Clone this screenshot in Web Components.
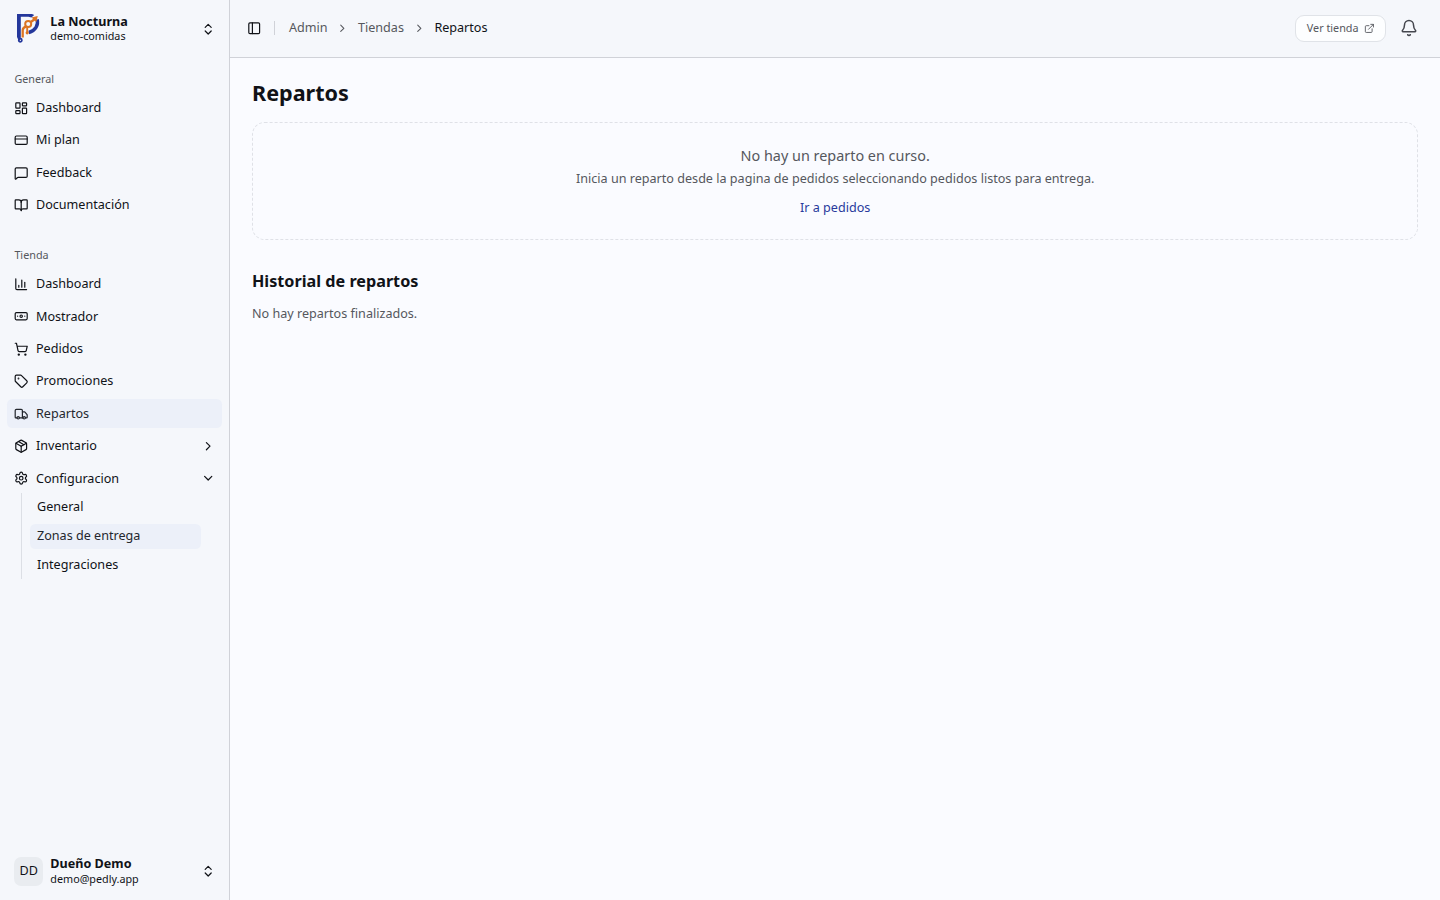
<!DOCTYPE html>
<html lang="es">
<head>
<meta charset="utf-8">
<title>Repartos</title>
<style>
  :root {
    font-size: 14.4px;
    --sidebar: #f5f7fb;
    --background: #fafbff;
    --foreground: #101217;
    --muted: #55575d;
    --border: #d0d2d8;
    --accent: #ecf0f9;
    --primary: #283a9c;
  }
  body {
    margin: 0;
    background: var(--background);
    color: var(--foreground);
    font-family: "Noto Sans", sans-serif;
    line-height: 1.5;
  }
</style>
</head>
<body>
<app-shell>
  <app-sidebar slot="sidebar">
    <account-button slot="header" name="La Nocturna" detail="demo-comidas"><brand-logo></brand-logo></account-button>
    <nav-group label="General">
      <nav-item icon="dashboard">Dashboard</nav-item>
      <nav-item icon="card">Mi plan</nav-item>
      <nav-item icon="message">Feedback</nav-item>
      <nav-item icon="book">Documentación</nav-item>
    </nav-group>
    <nav-group label="Tienda">
      <nav-item icon="chart">Dashboard</nav-item>
      <nav-item icon="banknote">Mostrador</nav-item>
      <nav-item icon="cart">Pedidos</nav-item>
      <nav-item icon="tag">Promociones</nav-item>
      <nav-item icon="truck" active>Repartos</nav-item>
      <nav-item icon="package" chevron="right">Inventario</nav-item>
      <nav-item icon="settings" chevron="down">Configuracion
        <nav-sub-item slot="sub">General</nav-sub-item>
        <nav-sub-item slot="sub" active>Zonas de entrega</nav-sub-item>
        <nav-sub-item slot="sub">Integraciones</nav-sub-item>
      </nav-item>
    </nav-group>
    <account-button slot="footer" name="Dueño Demo" detail="demo@pedly.app"><user-avatar>DD</user-avatar></account-button>
  </app-sidebar>
  <app-header slot="header">
    <crumb-item>Admin</crumb-item>
    <crumb-item>Tiendas</crumb-item>
    <crumb-item current>Repartos</crumb-item>
  </app-header>
  <page-repartos></page-repartos>
</app-shell>

<script>
const ICONS = {
  dashboard: '<rect width="7" height="9" x="3" y="3" rx="1"/><rect width="7" height="5" x="14" y="3" rx="1"/><rect width="7" height="9" x="14" y="12" rx="1"/><rect width="7" height="5" x="3" y="16" rx="1"/>',
  card: '<rect width="20" height="14" x="2" y="5" rx="2"/><path d="M2 10h20"/>',
  message: '<path d="M22 17a2 2 0 0 1-2 2H6.828a2 2 0 0 0-1.414.586l-2.202 2.202A.71.71 0 0 1 2 21.286V5a2 2 0 0 1 2-2h16a2 2 0 0 1 2 2z"/>',
  book: '<path d="M12 7v14"/><path d="M3 18a1 1 0 0 1-1-1V4a1 1 0 0 1 1-1h5a4 4 0 0 1 4 4 4 4 0 0 1 4-4h5a1 1 0 0 1 1 1v13a1 1 0 0 1-1 1h-6a3 3 0 0 0-3 3 3 3 0 0 0-3-3z"/>',
  chart: '<path d="M3 3v16a2 2 0 0 0 2 2h16"/><path d="M18 17V9"/><path d="M13 17V5"/><path d="M8 17v-3"/>',
  banknote: '<rect width="20" height="12" x="2" y="6" rx="2"/><circle cx="12" cy="12" r="2"/><path d="M6 12h.01M18 12h.01"/>',
  cart: '<circle cx="8" cy="21" r="1"/><circle cx="19" cy="21" r="1"/><path d="M2.05 2.05h2l2.66 12.42a2 2 0 0 0 2 1.58h9.78a2 2 0 0 0 1.95-1.57l1.65-7.43H5.12"/>',
  tag: '<path d="M12.586 2.586A2 2 0 0 0 11.172 2H4a2 2 0 0 0-2 2v7.172a2 2 0 0 0 .586 1.414l8.704 8.704a2.426 2.426 0 0 0 3.42 0l6.58-6.58a2.426 2.426 0 0 0 0-3.42z"/><circle cx="7.5" cy="7.5" r=".5" fill="currentColor"/>',
  truck: '<path d="M14 18V6a2 2 0 0 0-2-2H4a2 2 0 0 0-2 2v11a1 1 0 0 0 1 1h2"/><path d="M15 18H9"/><path d="M19 18h2a1 1 0 0 0 1-1v-3.65a1 1 0 0 0-.22-.624l-3.48-4.35A1 1 0 0 0 17.52 8H14"/><circle cx="17" cy="18" r="2"/><circle cx="7" cy="18" r="2"/>',
  package: '<path d="M11 21.73a2 2 0 0 0 2 0l7-4A2 2 0 0 0 21 16V8a2 2 0 0 0-1-1.73l-7-4a2 2 0 0 0-2 0l-7 4A2 2 0 0 0 3 8v8a2 2 0 0 0 1 1.73z"/><path d="M12 22V12"/><path d="M3.29 7 12 12l8.71-5"/><path d="m7.5 4.27 9 5.15"/>',
  settings: '<path d="M9.671 4.136a2.34 2.34 0 0 1 4.659 0 2.34 2.34 0 0 0 3.319 1.915 2.34 2.34 0 0 1 2.33 4.033 2.34 2.34 0 0 0 0 3.831 2.34 2.34 0 0 1-2.33 4.033 2.34 2.34 0 0 0-3.319 1.915 2.34 2.34 0 0 1-4.659 0 2.34 2.34 0 0 0-3.32-1.915 2.34 2.34 0 0 1-2.33-4.033 2.34 2.34 0 0 0 0-3.831A2.34 2.34 0 0 1 6.35 6.051a2.34 2.34 0 0 0 3.319-1.915"/><circle cx="12" cy="12" r="3"/>',
  right: '<path d="m9 18 6-6-6-6"/>',
  down: '<path d="m6 9 6 6 6-6"/>',
  updown: '<path d="m7 15 5 5 5-5"/><path d="m7 9 5-5 5 5"/>',
  panel: '<rect width="18" height="18" x="3" y="3" rx="2"/><path d="M9 3v18"/>',
  external: '<path d="M15 3h6v6"/><path d="M10 14 21 3"/><path d="M18 13v6a2 2 0 0 1-2 2H5a2 2 0 0 1-2-2V8a2 2 0 0 1 2-2h6"/>',
  bell: '<path d="M10.268 21a2 2 0 0 0 3.464 0"/><path d="M3.262 15.326A1 1 0 0 0 4 17h16a1 1 0 0 0 .74-1.673C19.41 13.956 18 12.499 18 8A6 6 0 0 0 6 8c0 4.499-1.411 5.956-2.738 7.326"/>'
};

class BaseElement extends HTMLElement {
  connectedCallback() {
    if (this.shadowRoot) return;
    this.attachShadow({ mode: 'open' }).innerHTML = this.render();
  }
}

class UiIcon extends BaseElement {
  render() {
    return `
      <style>
        :host { display: block; flex: none; width: var(--size, 1rem); height: var(--size, 1rem); }
        svg { display: block; width: 100%; height: 100%; }
      </style>
      <svg viewBox="0 0 24 24" fill="none" stroke="currentColor" stroke-width="2" stroke-linecap="round" stroke-linejoin="round">${ICONS[this.getAttribute('name')]}</svg>
    `;
  }
}

class BrandLogo extends BaseElement {
  render() {
    return `
      <style>
        :host { display: block; width: 2rem; height: 2rem; }
        svg { display: block; width: 100%; height: 100%; }
      </style>
      <svg viewBox="0 0 28.8 28.8" fill="none">
        <path d="M3 -.4H15c2.200 0 3.800.5 5.200 1.500L17.400 3.400 14.500 2.800H6.800v20.400L6 26.500H4.600L3 23z" fill="#24379b"/>
        <path d="M23.200 5.500c1.400 5.600-1.700 11.300-8.400 13" stroke="#24379b" stroke-width="3.400"/>
        <circle cx="6.300" cy="26.300" r="1.600" stroke="#24379b" stroke-width="1.700"/>
        <path d="M8.700 23.600v-7.300c0-2.500 1.600-3.400 3.700-4M16.500 8.300l4.800-3.500" stroke="#dc7422" stroke-width="2.300"/>
        <circle cx="14.200" cy="10" r="3" stroke="#dc7422" stroke-width="2"/>
        <path d="m17.500 3.600 6.200-1.700-1.300 6z" fill="#dc7422"/>
        <path d="M13.200 13v6" stroke="#dc7422" stroke-width="1.900"/>
        <circle cx="13.200" cy="18.800" r="1.600" fill="#dc7422"/>
      </svg>
    `;
  }
}

class UserAvatar extends BaseElement {
  render() {
    return `
      <style>
        :host {
          display: grid; place-items: center; width: 2rem; height: 2rem;
          border-radius: 0.5rem; background: #e9ecf0; font-size: 0.875rem;
        }
      </style>
      <slot></slot>
    `;
  }
}

class AccountButton extends BaseElement {
  render() {
    return `
      <style>
        :host {
          display: flex; align-items: center; gap: 0.5rem;
          height: 3rem; padding: 0 0.5rem; box-sizing: border-box;
        }
        .text { flex: 1; display: grid; line-height: 1.25; }
        .name { font-size: 0.875rem; font-weight: 700; }
        .detail { font-size: 0.75rem; line-height: 1rem; }
      </style>
      <slot></slot>
      <div class="text">
        <span class="name">${this.getAttribute('name')}</span>
        <span class="detail">${this.getAttribute('detail')}</span>
      </div>
      <ui-icon name="updown"></ui-icon>
    `;
  }
}

class NavGroup extends BaseElement {
  render() {
    return `
      <style>
        :host { display: block; padding: 0.5rem; }
        .label {
          display: flex; align-items: center; height: 2rem; padding: 0 0.5rem;
          color: var(--muted); font-size: 0.75rem;
        }
        .menu { display: flex; flex-direction: column; gap: 0.25rem; }
      </style>
      <div class="label">${this.getAttribute('label')}</div>
      <div class="menu"><slot></slot></div>
    `;
  }
}

class NavItem extends BaseElement {
  render() {
    const chevron = this.getAttribute('chevron');
    return `
      <style>
        :host { display: block; font-size: 0.875rem; line-height: 1.25rem; }
        .row {
          display: flex; align-items: center; gap: 0.5rem;
          height: 2rem; padding: 0 0.5rem; border-radius: 0.375rem;
        }
        :host([active]) .row { background: var(--accent); color: #24272e; }
        .text { flex: 1; }
        .sub {
          display: flex; flex-direction: column; gap: 0.25rem;
          margin: 0 0.875rem 0 calc(0.875rem + 1px); padding: 0.125rem 0.625rem;
          border-left: 1px solid #dcdfe5;
        }
      </style>
      <div class="row">
        <ui-icon name="${this.getAttribute('icon')}"></ui-icon>
        <span class="text"><slot></slot></span>
        ${chevron ? `<ui-icon name="${chevron}"></ui-icon>` : ''}
      </div>
      ${chevron === 'down' ? '<div class="sub"><slot name="sub"></slot></div>' : ''}
    `;
  }
}

class NavSubItem extends BaseElement {
  render() {
    return `
      <style>
        :host {
          display: flex; align-items: center; height: 1.75rem; margin-left: -1px;
          padding: 0 0.5rem; border-radius: 0.375rem; line-height: 1.5;
        }
        :host([active]) { background: var(--accent); color: #24272e; }
      </style>
      <slot></slot>
    `;
  }
}

class AppSidebar extends BaseElement {
  render() {
    return `
      <style>
        :host {
          display: flex; flex-direction: column; height: 100%; box-sizing: border-box;
          background: var(--sidebar); border-right: 1px solid var(--border);
        }
        header, footer { padding: 0.5rem; }
        nav { flex: 1; display: flex; flex-direction: column; gap: 0.5rem; }
      </style>
      <header><slot name="header"></slot></header>
      <nav><slot></slot></nav>
      <footer><slot name="footer"></slot></footer>
    `;
  }
}

class CrumbItem extends BaseElement {
  render() {
    return `
      <style>
        :host { display: flex; align-items: center; gap: 0.6rem; color: var(--muted); }
        :host([current]) { color: var(--foreground); }
        ui-icon { --size: 0.875rem; }
      </style>
      <slot></slot>
      ${this.hasAttribute('current') ? '' : '<ui-icon name="right"></ui-icon>'}
    `;
  }
}

class AppHeader extends BaseElement {
  render() {
    return `
      <style>
        :host {
          display: flex; align-items: center; gap: 0.5rem; height: 4rem; box-sizing: border-box;
          padding: 0 1.5rem 0 1rem; background: var(--sidebar); border-bottom: 1px solid var(--border);
        }
        .toggle { display: grid; place-items: center; width: 1.75rem; height: 1.75rem; margin-left: -0.25rem; }
        .separator { width: 1px; height: 1rem; margin-right: 0.5rem; background: var(--border); }
        .crumbs { flex: 1; display: flex; gap: 0.64rem; font-size: 0.875rem; line-height: 1.25rem; }
        .store {
          display: flex; align-items: center; gap: 0.375rem; padding: 0.375rem 0.72rem;
          border: 1px solid #e0e3e8; border-radius: 0.625rem; background: #fdfeff;
          color: var(--muted); font-size: 0.75rem; line-height: 1rem; margin-right: 0.5rem;
        }
        .store ui-icon { --size: 0.75rem; }
        .bell { --size: 1.25rem; color: #45474e; }
      </style>
      <div class="toggle"><ui-icon name="panel"></ui-icon></div>
      <div class="separator"></div>
      <div class="crumbs"><slot></slot></div>
      <div class="store">Ver tienda <ui-icon name="external"></ui-icon></div>
      <ui-icon class="bell" name="bell"></ui-icon>
    `;
  }
}

class PageRepartos extends BaseElement {
  render() {
    return `
      <style>
        :host { display: block; padding: 1.5rem; }
        h1, h2, p { margin: 0; }
        h1 { font-size: 1.5rem; line-height: 2rem; font-weight: 700; }
        .empty {
          margin-top: 1rem; padding: 1.5rem; text-align: center; color: var(--muted);
          border: 1px dashed #dfe1e7; border-radius: 0.875rem;
        }
        .empty p + p, a, .none { font-size: 0.875rem; line-height: 1.25rem; }
        .empty p + p { margin-top: 0.25rem; }
        a { display: block; margin-top: 0.75rem; color: var(--primary); }
        h2 { margin-top: 2.05rem; font-size: 1.125rem; line-height: 1.75rem; font-weight: 700; }
        .none { margin-top: 0.75rem; color: var(--muted); }
      </style>
      <h1>Repartos</h1>
      <section class="empty">
        <p>No hay un reparto en curso.</p>
        <p>Inicia un reparto desde la pagina de pedidos seleccionando pedidos listos para entrega.</p>
        <a>Ir a pedidos</a>
      </section>
      <h2>Historial de repartos</h2>
      <p class="none">No hay repartos finalizados.</p>
    `;
  }
}

class AppShell extends BaseElement {
  render() {
    return `
      <style>
        :host { display: grid; grid-template-columns: 16rem minmax(0, 1fr); height: 100vh; }
        aside { min-height: 0; }
      </style>
      <aside><slot name="sidebar"></slot></aside>
      <main>
        <slot name="header"></slot>
        <slot></slot>
      </main>
    `;
  }
}

customElements.define('ui-icon', UiIcon);
customElements.define('brand-logo', BrandLogo);
customElements.define('user-avatar', UserAvatar);
customElements.define('account-button', AccountButton);
customElements.define('nav-group', NavGroup);
customElements.define('nav-item', NavItem);
customElements.define('nav-sub-item', NavSubItem);
customElements.define('app-sidebar', AppSidebar);
customElements.define('crumb-item', CrumbItem);
customElements.define('app-header', AppHeader);
customElements.define('page-repartos', PageRepartos);
customElements.define('app-shell', AppShell);
</script>
</body>
</html>
